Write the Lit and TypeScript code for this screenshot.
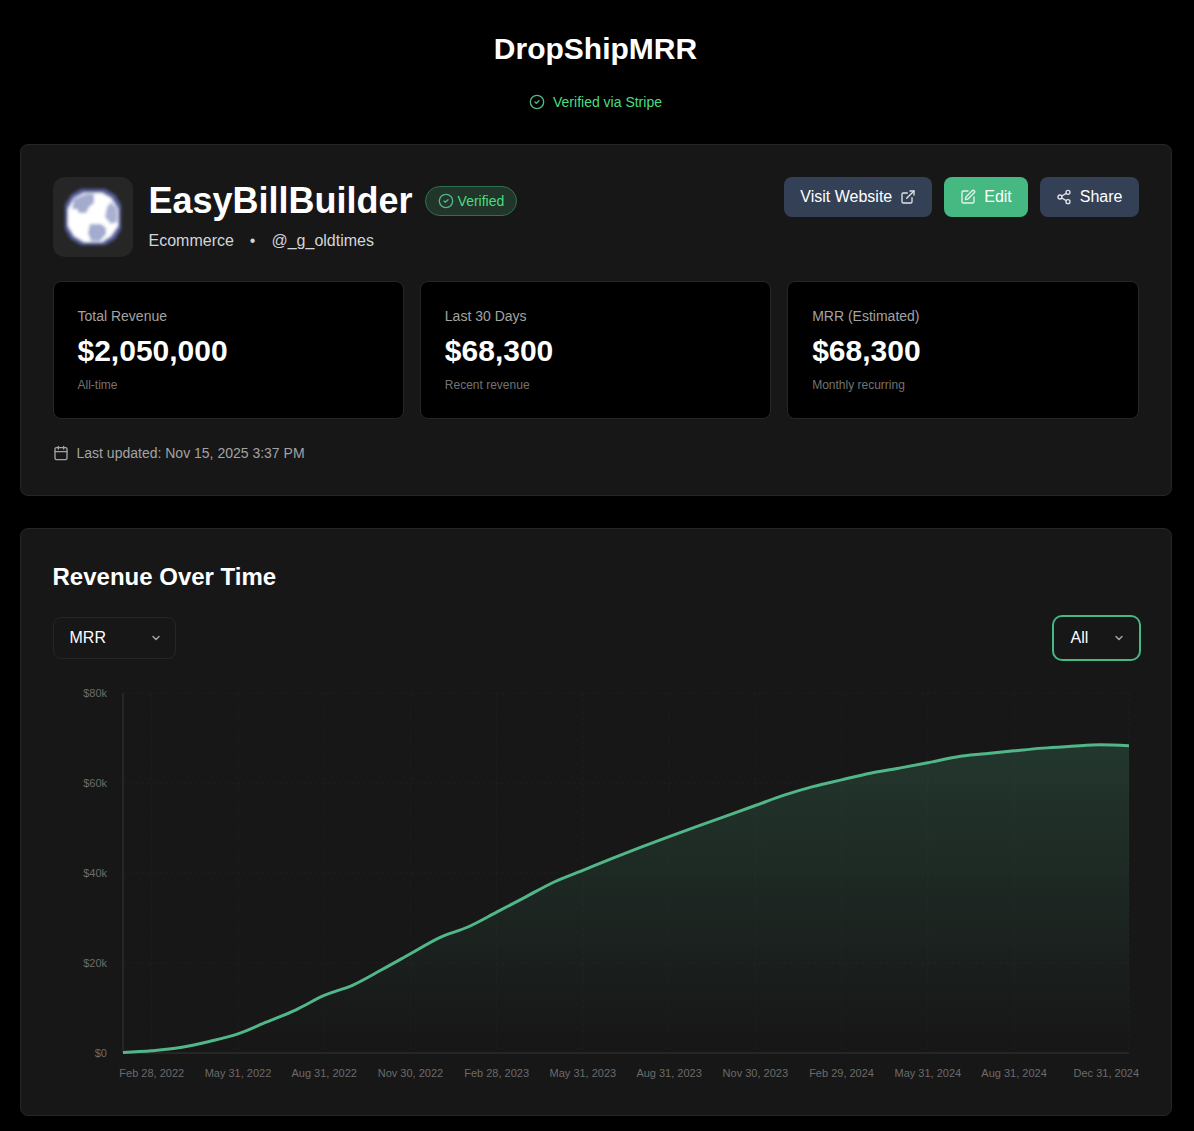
import { LitElement, html, svg, css } from "lit";
import { customElement, property } from "lit/decorators.js";

const checkCircle = html`<svg class="icon" viewBox="0 0 24 24"><circle cx="12" cy="12" r="10" /><path d="m9 12 2 2 4-4" /></svg>`;
const externalLink = html`<svg class="icon" viewBox="0 0 24 24"><path d="M15 3h6v6" /><path d="M10 14 21 3" /><path d="M18 13v6a2 2 0 0 1-2 2H5a2 2 0 0 1-2-2V8a2 2 0 0 1 2-2h6" /></svg>`;
const squarePen = html`<svg class="icon" viewBox="0 0 24 24"><path d="M12 3H5a2 2 0 0 0-2 2v14a2 2 0 0 0 2 2h14a2 2 0 0 0 2-2v-7" /><path d="M18.375 2.625a1 1 0 0 1 3 3l-9.013 9.014a2 2 0 0 1-.853.505l-2.873.84a.5.5 0 0 1-.62-.62l.84-2.873a2 2 0 0 1 .506-.852z" /></svg>`;
const shareIcon = html`<svg class="icon" viewBox="0 0 24 24"><circle cx="18" cy="5" r="3" /><circle cx="6" cy="12" r="3" /><circle cx="18" cy="19" r="3" /><path d="m8.59 13.51 6.83 3.98M15.41 6.51l-6.82 3.98" /></svg>`;
const calendar = html`<svg class="icon" viewBox="0 0 24 24"><path d="M8 2v4M16 2v4M3 10h18" /><rect x="3" y="4" width="18" height="18" rx="2" /></svg>`;
const chevron = html`<svg class="chevron" viewBox="0 0 24 24"><path d="m6 9 6 6 6-6" /></svg>`;

const iconStyles = css`
  .icon {
    width: 16px;
    height: 16px;
    flex: none;
    fill: none;
    stroke: currentColor;
    stroke-width: 2;
    stroke-linecap: round;
    stroke-linejoin: round;
  }
`;

/* Monthly recurring revenue in dollars, January 2022 to December 2024. */
const revenue = [
  100, 500, 1200, 2550, 4250, 6900, 9550, 12800, 15100, 18500, 22050, 25600, 28000, 31300, 34650, 38000,
  40600, 43200, 45700, 48100, 50400, 52700, 55000, 57300, 59200, 60700, 62150, 63300, 64500, 65800,
  66500, 67150, 67750, 68150, 68500, 68300,
];

const ticks: [number, string][] = [
  [1, "Feb 28, 2022"], [4, "May 31, 2022"], [7, "Aug 31, 2022"], [10, "Nov 30, 2022"],
  [13, "Feb 28, 2023"], [16, "May 31, 2023"], [19, "Aug 31, 2023"], [22, "Nov 30, 2023"],
  [25, "Feb 29, 2024"], [28, "May 31, 2024"], [31, "Aug 31, 2024"], [35, "Dec 31, 2024"],
];

const LEFT = 70;
const RIGHT = 1076;
const TOP = 10;
const BOTTOM = 370;
const px = (i: number) => LEFT + ((RIGHT - LEFT) * i) / (revenue.length - 1);
const py = (v: number) => BOTTOM - ((BOTTOM - TOP) * v) / 80000;

/* Monotone cubic interpolation through evenly spaced points. */
function monotonePath(values: number[]): string {
  const h = px(1) - px(0);
  const ys = values.map(py);
  const slope = ys.slice(1).map((y, i) => (y - ys[i]) / h);
  const tangent = ys.map((_, i) => {
    if (i === 0 || i === ys.length - 1) return 0;
    const a = slope[i - 1];
    const b = slope[i];
    return (Math.sign(a) + Math.sign(b)) * Math.min(Math.abs(a), Math.abs(b), 0.25 * Math.abs(a + b));
  });
  tangent[0] = (3 * slope[0] - tangent[1]) / 2;
  tangent[ys.length - 1] = (3 * slope[slope.length - 1] - tangent[ys.length - 2]) / 2;
  let d = `M${px(0)},${ys[0]}`;
  for (let i = 0; i < ys.length - 1; i++) {
    d += `C${px(i) + h / 3},${ys[i] + (tangent[i] * h) / 3},${px(i + 1) - h / 3},${ys[i + 1] - (tangent[i + 1] * h) / 3},${px(i + 1)},${ys[i + 1]}`;
  }
  return d;
}

@customElement("revenue-chart")
export class RevenueChart extends LitElement {
  static styles = css`
    :host { display: block; }
    .chart { display: block; width: 1086px; height: 400px; }
    .grid { stroke: #222; stroke-width: 1; stroke-dasharray: 3 3; opacity: 0.6; }
    .axis { stroke: #262626; stroke-width: 2; }
    .line { fill: none; stroke: #52b788; stroke-width: 3; }
    .label { font-family: "Liberation Sans", Arial, sans-serif; font-size: 11px; fill: #6b6b6b; }
  `;

  render() {
    const line = monotonePath(revenue);
    return html`<svg class="chart" viewBox="0 0 1086 400">
      <defs>
        <linearGradient id="fill" x1="0" y1="0" x2="0" y2="1">
          <stop offset="0%" stop-color="#52b788" stop-opacity="0.2" />
          <stop offset="95%" stop-color="#52b788" stop-opacity="0" />
        </linearGradient>
        <clipPath id="plot"><rect x=${LEFT} y="0" width=${RIGHT - LEFT} height="400" /></clipPath>
      </defs>
      ${[20000, 40000, 60000, 80000].map(
        (v) => svg`<line class="grid" x1=${LEFT} x2=${RIGHT} y1=${py(v)} y2=${py(v)} />`
      )}
      ${ticks.map(([i]) => svg`<line class="grid" x1=${px(i)} x2=${px(i)} y1=${TOP} y2=${BOTTOM} />`)}
      <line class="axis" x1=${LEFT} x2=${RIGHT} y1=${BOTTOM} y2=${BOTTOM} />
      <line class="axis" x1=${LEFT} x2=${LEFT} y1=${TOP} y2=${BOTTOM} />
      <g clip-path="url(#plot)">
        <path d=${`${line}L${RIGHT},${BOTTOM}L${LEFT},${BOTTOM}Z`} fill="url(#fill)" />
        <path class="line" d=${line} />
      </g>
      ${[0, 20, 40, 60, 80].map(
        (k) => svg`<text class="label" text-anchor="end" x="54" y=${py(k * 1000) + 4}>${k ? `$${k}k` : "$0"}</text>`
      )}
      ${ticks.map(([i, text]) =>
        i === 35
          ? svg`<text class="label" text-anchor="end" x="1086" y="394">${text}</text>`
          : svg`<text class="label" text-anchor="middle" x=${px(i)} y="394">${text}</text>`
      )}
    </svg>`;
  }
}

@customElement("stat-card")
export class StatCard extends LitElement {
  @property() label = "";
  @property() value = "";
  @property() note = "";

  static styles = css`
    :host {
      display: flex;
      flex-direction: column;
      box-sizing: border-box;
      padding: 24px 24px 25px;
      border: 1px solid #262626;
      border-radius: 8px;
      background: #000;
    }
    .label { margin-bottom: 7px; font-size: 14px; line-height: 20px; color: #a3a3a3; }
    .value { margin-bottom: 8px; font-size: 30px; line-height: 36px; font-weight: 700; color: #fff; }
    .note { font-size: 12px; line-height: 16px; color: #737373; }
  `;

  render() {
    return html`
      <div class="label">${this.label}</div>
      <div class="value">${this.value}</div>
      <div class="note">${this.note}</div>
    `;
  }
}

@customElement("app-root")
export class AppRoot extends LitElement {
  static styles = [
    iconStyles,
    css`
      :host {
        display: block;
        box-sizing: border-box;
        height: 1131px;
        overflow: hidden;
        padding: 31px 22.5px 0 19.5px;
        background: #000;
        color: #fff;
        font-family: "Liberation Sans", Arial, sans-serif;
        font-size: 16px;
        line-height: 24px;
      }
      h1, h2, h3 { margin: 0; font-weight: 700; }
      .brand { font-size: 30px; line-height: 36px; text-align: center; }
      .stripe {
        display: flex;
        justify-content: center;
        align-items: center;
        gap: 8px;
        margin: 25px 0 32px;
        font-size: 14px;
        line-height: 20px;
        color: #4ade80;
      }
      .stripe .icon, .badge .icon { color: #52b788; }
      .card {
        box-sizing: border-box;
        padding: 32px;
        border: 1px solid #262626;
        border-radius: 8px;
        background: #171717;
      }
      .card + .card { margin-top: 32px; }
      .head { display: flex; height: 80px; margin-bottom: 24px; }
      .logo {
        display: flex;
        align-items: center;
        justify-content: center;
        width: 80px;
        height: 80px;
        margin-right: 16px;
        border-radius: 12px;
        background: #262626;
      }
      .globe { width: 64px; height: 64px; }
      .name-row { display: flex; align-items: center; gap: 12px; height: 40px; margin: 4px 0 8px; }
      .name { font-size: 36px; line-height: 40px; }
      .badge {
        display: flex;
        align-items: center;
        gap: 4px;
        box-sizing: border-box;
        height: 30px;
        padding: 0 12px;
        border: 1px solid #2f7050;
        border-radius: 15px;
        background: #21352b;
        font-size: 14px;
        color: #4ade80;
      }
      .meta { display: flex; gap: 16px; line-height: 24px; color: #d1d5db; }
      .actions { display: flex; gap: 12px; margin-left: auto; height: 40px; }
      .btn {
        display: flex;
        align-items: center;
        gap: 8px;
        padding: 0 16px;
        border-radius: 8px;
        background: #344055;
      }
      .btn .icon { opacity: 0.85; }
      .edit { background: #45b981; }
      .stats { display: grid; grid-template-columns: repeat(3, 1fr); gap: 16px; }
      .updated {
        display: flex;
        align-items: center;
        gap: 8px;
        margin-top: 24px;
        font-size: 14px;
        line-height: 20px;
        color: #a3a3a3;
      }
      .title { font-size: 24px; line-height: 32px; }
      .filters { display: flex; justify-content: space-between; margin: 24px 0; }
      .select {
        display: flex;
        align-items: center;
        justify-content: space-between;
        box-sizing: border-box;
        width: 123px;
        height: 42px;
        padding: 0 12.5px 0 16px;
        border: 1px solid #262626;
        border-radius: 8px;
      }
      .range { width: 85px; border-color: transparent; box-shadow: 0 0 0 2px #45b981; }
      .chevron {
        width: 12px;
        height: 12px;
        fill: none;
        stroke: #a3a3a3;
        stroke-width: 3;
        stroke-linecap: round;
        stroke-linejoin: round;
      }
    `,
  ];

  render() {
    return html`
      <h1 class="brand">DropShipMRR</h1>
      <div class="stripe">${checkCircle}<span>Verified via Stripe</span></div>
      <section class="card">
        <div class="head">
          <div class="logo">
            <svg class="globe" viewBox="0 0 64 64">
              <defs>
                <filter id="soft" x="-20%" y="-20%" width="140%" height="140%"><feGaussianBlur stdDeviation="1.8" /></filter>
              </defs>
              <g filter="url(#soft)">
                <path d="M20 4H44L54 10L60 20V44L54 54L44 60H20L10 54L4 44V20L10 10Z" fill="#5a63a0" />
                <path d="M23 8H41L50 13L57 24V41L50 51L41 57H23L13 51L7 41V24L13 13Z" fill="#fff" />
                <path d="M13 14L25 9H33V18L28 22L25 28H18L16 24H11Z" fill="#a3abce" />
                <path d="M46 22L50 17L56 24V37L50 39L44 32Z" fill="#a9b1d2" />
                <path d="M29 39H40L45 43V49L39 56H30L27 48Z" fill="#a3abce" />
              </g>
            </svg>
          </div>
          <div>
            <div class="name-row">
              <h2 class="name">EasyBillBuilder</h2>
              <span class="badge">${checkCircle}<span>Verified</span></span>
            </div>
            <div class="meta"><span>Ecommerce</span><span>•</span><span>@_g_oldtimes</span></div>
          </div>
          <div class="actions">
            <div class="btn"><span>Visit Website</span>${externalLink}</div>
            <div class="btn edit">${squarePen}<span>Edit</span></div>
            <div class="btn">${shareIcon}<span>Share</span></div>
          </div>
        </div>
        <div class="stats">
          <stat-card label="Total Revenue" value="$2,050,000" note="All-time"></stat-card>
          <stat-card label="Last 30 Days" value="$68,300" note="Recent revenue"></stat-card>
          <stat-card label="MRR (Estimated)" value="$68,300" note="Monthly recurring"></stat-card>
        </div>
        <div class="updated">${calendar}<span>Last updated: Nov 15, 2025 3:37 PM</span></div>
      </section>
      <section class="card">
        <h3 class="title">Revenue Over Time</h3>
        <div class="filters">
          <div class="select"><span>MRR</span>${chevron}</div>
          <div class="select range"><span>All</span>${chevron}</div>
        </div>
        <revenue-chart></revenue-chart>
      </section>
    `;
  }
}
